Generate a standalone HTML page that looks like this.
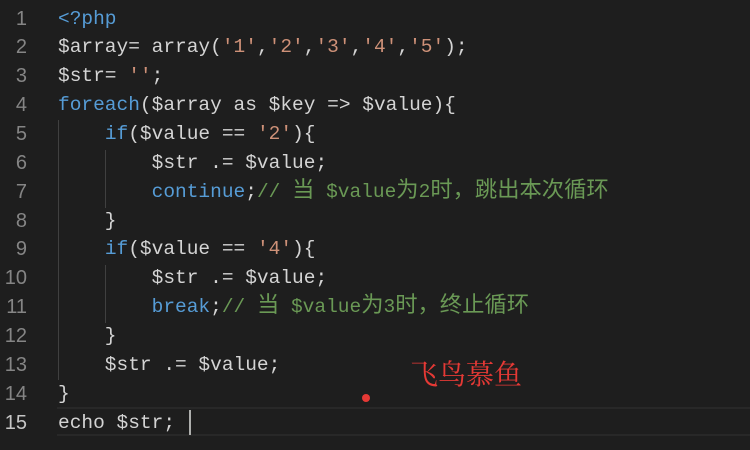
<!DOCTYPE html>
<html><head><meta charset="utf-8"><style>
body{margin:0;width:750px;height:450px;background:#1e1e1e;overflow:hidden;position:relative;font-family:"Liberation Mono","Noto Sans CJK SC",monospace;font-size:19.5px;color:#d4d4d4}
.ln{position:absolute;left:0;width:30px;text-align:right;color:#858585;line-height:28.86px;font-family:"Liberation Sans",sans-serif;font-size:20px}
.code{position:absolute;left:58px;top:4.6px;line-height:28.86px;white-space:pre}
.l{height:28.86px}
.k{color:#569cd6}.s{color:#ce9178}.c{color:#6a9955}
.z{font-family:"Noto Sans CJK SC",sans-serif;font-size:22.3px;line-height:20px}
.g{position:absolute;width:1px;background:#404040}
</style></head><body>
<div style="position:absolute;left:57px;right:0;top:407px;height:29px;border-top:2px solid #282828;border-bottom:2px solid #282828;box-sizing:border-box"></div>
<div class="ln" style="top:4.6px;left:-3px">1<br>2<br>3<br>4<br>5<br>6<br>7<br>8<br>9<br>10<br>11<br>12<br>13<br>14<br><span style="color:#c6c6c6">15</span></div>
<div class="g" style="left:58px;top:120px;height:260px"></div>
<div class="g" style="left:105px;top:150px;height:58px"></div>
<div class="g" style="left:105px;top:265px;height:58px"></div>
<div class="code"><div class="l"><span class="k">&lt;?php</span></div><div class="l">$array= array(<span class="s">'1'</span>,<span class="s">'2'</span>,<span class="s">'3'</span>,<span class="s">'4'</span>,<span class="s">'5'</span>);</div><div class="l">$str= <span class="s">''</span>;</div><div class="l"><span class="k">foreach</span>($array as $key =&gt; $value){</div><div class="l">    <span class="k">if</span>($value == <span class="s">'2'</span>){</div><div class="l">        $str .= $value;</div><div class="l">        <span class="k">continue</span>;<span class="c">// <span class="z">当</span> $value<span class="z">为</span>2<span class="z">时，跳出本次循环</span></span></div><div class="l">    }</div><div class="l">    <span class="k">if</span>($value == <span class="s">'4'</span>){</div><div class="l">        $str .= $value;</div><div class="l">        <span class="k">break</span>;<span class="c">// <span class="z">当</span> $value<span class="z">为</span>3<span class="z">时，终止循环</span></span></div><div class="l">    }</div><div class="l">    $str .= $value;</div><div class="l">}</div><div class="l">echo $str; </div></div>
<div style="position:absolute;left:189px;top:410px;width:2px;height:25px;background:#aeafad"></div>
<div style="position:absolute;left:410px;top:355px;color:#e53935;font-family:'Noto Serif CJK SC',serif;font-size:28px;line-height:36px">飞鸟慕鱼</div>
<div style="position:absolute;left:362px;top:394px;width:8px;height:8px;border-radius:50%;background:#e53935"></div>
</body></html>
